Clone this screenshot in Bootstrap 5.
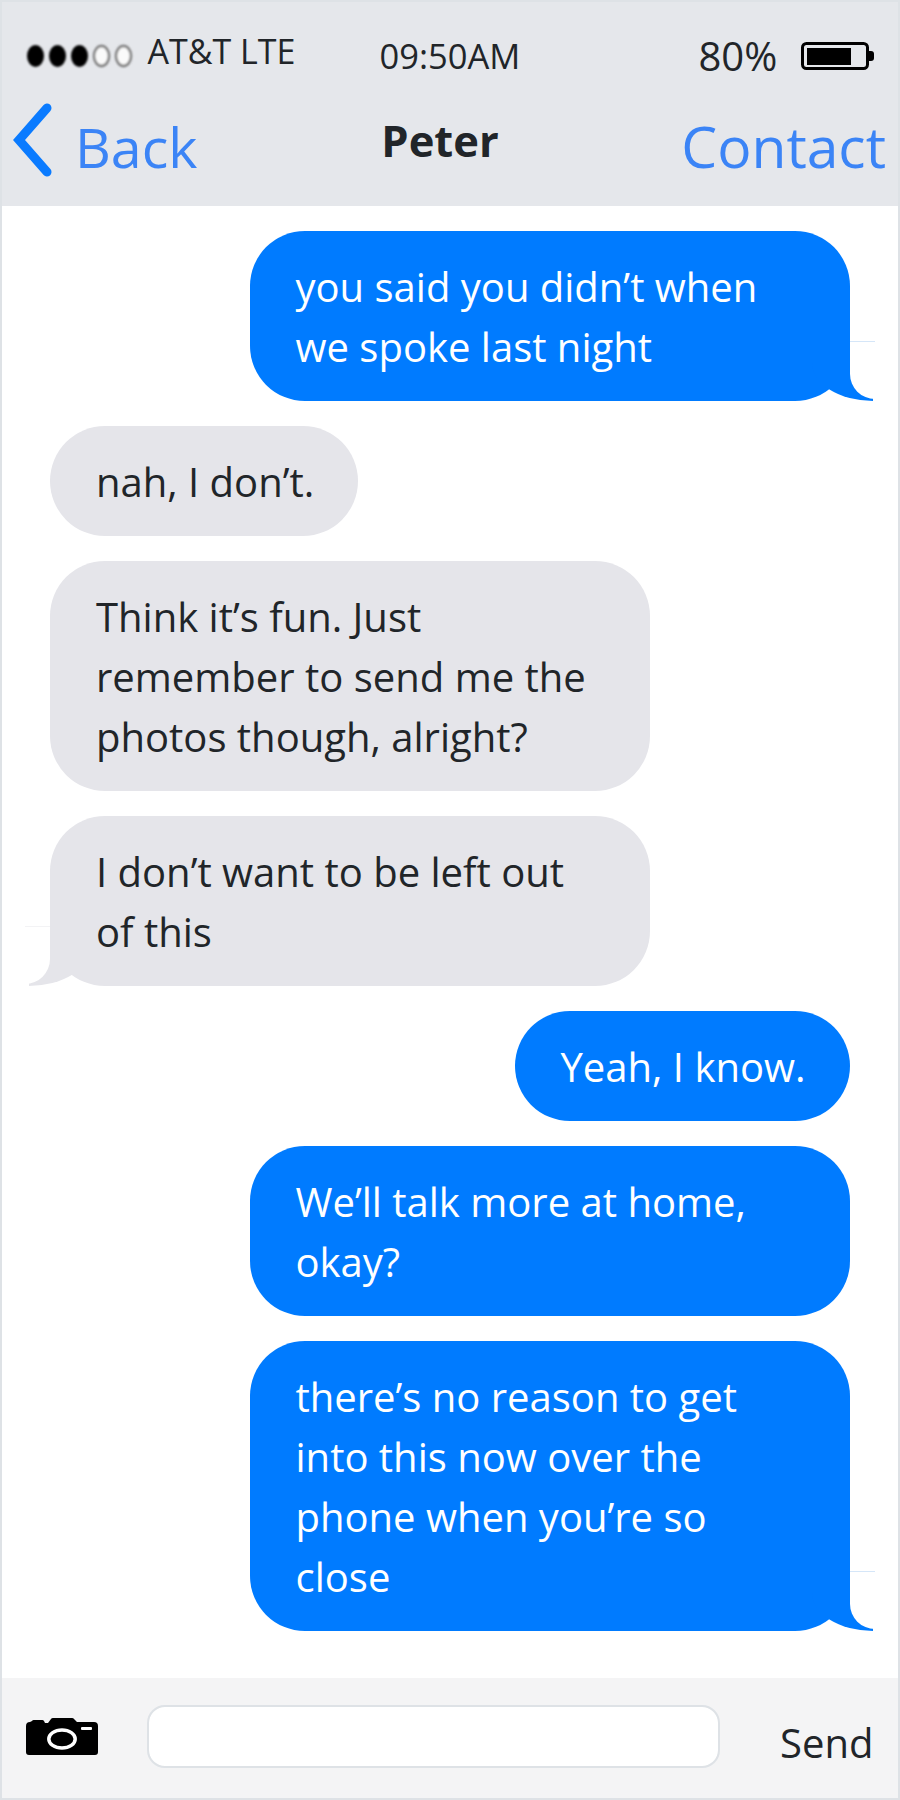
<!DOCTYPE html>
<html lang="en">
<head>
    <meta charset="UTF-8">
    <meta name="viewport" content="width=device-width, initial-scale=1.0">
    <title>Messages - Peter</title>
    <link href="https://cdn.jsdelivr.net/npm/bootstrap@5.3.0/dist/css/bootstrap.min.css" rel="stylesheet">
    <style>
        body { font-family: "Open Sans", "Noto Sans", sans-serif; color: #212529; background: #fff; }
        .phone-frame { height: 1800px; border: 2.5px solid #dee2e6; }

        /* top bars */
        .top-bar { height: 203.5px; background: #e5e7eb; }
        .status-row { height: 85px; padding-left: 23px; padding-top: 20px; }
        .carrier-box { width: 354.5px; font-size: 34px; padding-bottom: 7px; }
        .carrier-box svg { margin-right: 8.5px; }
        .clock-box { width: 319px; font-size: 34.5px; padding-top: 3px; }
        .charge-box { font-size: 40px; padding-top: 3px; }
        .charge-box svg { margin-left: 23.5px; }
        .title-row { height: 118.5px; }
        .back-chevron { margin-left: 11px; margin-top: -12px; }
        .nav-link-text { font-size: 57px; color: #3b84f6; line-height: 1; text-decoration: none; }
        .back-text { margin-left: 22px; font-size: 55.5px; }
        .contact-text { margin-right: 12px; }
        .peter-title { font-size: 43.5px; font-weight: 700; position: absolute; left: 0; right: 20px; top: 21px; text-align: center; line-height: 1.5; }

        /* message list */
        .msg-list { padding: 25px 48.5px 0 48px; gap: 25px; }
        .msg-bubble { position: relative; max-width: 600px; padding: 26px 44px 24px 46px; border-radius: 55px; font-size: 40px; line-height: 60px; }
        .msg-out { background: #007bff; color: #fff; }
        .msg-in { background: #e5e5ea; color: #212529; }

        /* tails */
        .has-tail::before, .has-tail::after { content: ""; position: absolute; }
        .msg-out.has-tail::before { bottom: 0; right: -23px; width: 61px; height: 60px; background: #007bff; border-bottom-left-radius: 61px 38px; }
        .msg-out.has-tail::after { bottom: 2px; right: -25px; width: 25px; height: 58px; background: #fff; border-top: 1px solid #d5e6f8; border-bottom-left-radius: 25px; }
        .msg-in.has-tail::before { bottom: 0; left: -21px; width: 61px; height: 60px; background: #e5e5ea; border-bottom-right-radius: 61px 38px; }
        .msg-in.has-tail::after { bottom: 2px; left: -25px; width: 25px; height: 58px; background: #fff; border-top: 1px solid #f3f3f5; border-bottom-right-radius: 25px; }

        /* footer */
        .compose-bar { height: 120.5px; background: #f4f4f5; }
        .camera-icon { margin-left: 23.5px; margin-top: -2px; }
        .compose-input { width: 573px; height: 63px; margin-left: 49.5px; margin-top: -2px; border: 2px solid #dee2e6; border-radius: 18px; }
        .send-text { font-size: 40px; margin-left: 60px; margin-top: 10px; line-height: 1.5; }
    </style>
</head>
<body class="m-0">
    <div class="phone-frame d-flex flex-column">
        <header class="top-bar flex-shrink-0">
            <div class="status-row d-flex align-items-center">
                <div class="carrier-box d-flex align-items-center">
                    <svg width="114" height="36" viewBox="0 0 114 36">
                        <defs><filter id="soft"><feGaussianBlur stdDeviation="1.1"/></filter></defs>
                        <g filter="url(#soft)">
                            <ellipse cx="10.5" cy="23" rx="8.5" ry="11" fill="#000"/>
                            <ellipse cx="32.5" cy="23" rx="8.5" ry="11" fill="#000"/>
                            <ellipse cx="54.5" cy="23" rx="8.5" ry="11" fill="#000"/>
                            <ellipse cx="76.5" cy="23" rx="7.5" ry="10" fill="#fafafa" stroke="#777" stroke-width="2.4"/>
                            <ellipse cx="98.5" cy="23" rx="7.5" ry="10" fill="#fafafa" stroke="#777" stroke-width="2.4"/>
                        </g>
                    </svg>
                    <span>AT&amp;T LTE</span>
                </div>
                <div class="clock-box">09:50AM</div>
                <div class="charge-box d-flex align-items-center">
                    <span>80%</span>
                    <svg width="73" height="28" viewBox="0 0 73 28">
                        <rect x="1.5" y="1.5" width="65" height="25" rx="4" fill="none" stroke="#000" stroke-width="3"/>
                        <rect x="6" y="6" width="44" height="17" fill="#000"/>
                        <path d="M68 9h2a3 3 0 0 1 3 3v4a3 3 0 0 1-3 3h-2z" fill="#000"/>
                    </svg>
                </div>
            </div>
            <div class="title-row d-flex align-items-center justify-content-between position-relative">
                <div class="d-flex align-items-center">
                    <svg class="back-chevron" width="40" height="76" viewBox="0 0 40 76">
                        <path d="M34 6 6 38l28 32" fill="none" stroke="#0a7bff" stroke-width="9" stroke-linecap="round" stroke-linejoin="miter"/>
                    </svg>
                    <a href="#" class="nav-link-text back-text">Back</a>
                </div>
                <div class="peter-title">Peter</div>
                <a href="#" class="nav-link-text contact-text">Contact</a>
            </div>
        </header>

        <main class="msg-list d-flex flex-column flex-grow-1">
            <div class="msg-bubble msg-out has-tail align-self-end">you said you didn’t when we spoke last night</div>
            <div class="msg-bubble msg-in align-self-start">nah, I don’t.</div>
            <div class="msg-bubble msg-in align-self-start">Think it’s fun. Just remember to send me the photos though, alright?</div>
            <div class="msg-bubble msg-in has-tail align-self-start">I don’t want to be left out of this</div>
            <div class="msg-bubble msg-out align-self-end">Yeah, I know.</div>
            <div class="msg-bubble msg-out align-self-end">We’ll talk more at home, okay?</div>
            <div class="msg-bubble msg-out has-tail align-self-end">there’s no reason to get into this now over the phone when you’re so close</div>
        </main>

        <footer class="compose-bar flex-shrink-0 d-flex align-items-center">
            <svg class="camera-icon" width="72" height="37" viewBox="0 0 72 37">
                <path fill="#000" d="M0 8a4 4 0 0 1 4-4l2-1a2 2 0 0 1 2-1h8a2 2 0 0 1 2 1l1 2h3l3-4q.5-1 2-1h19q1.500 0 2 1l3 3h17a4 4 0 0 1 4 4v26a3 3 0 0 1-3 3H3a3 3 0 0 1-3-3z"/>
                <ellipse cx="36" cy="21" rx="13.200" ry="9" fill="none" stroke="#fff" stroke-width="3.500"/>
                <rect x="55" y="9" width="11" height="3" rx="1" fill="#fff"/>
            </svg>
            <input type="text" class="form-control compose-input" aria-label="Message">
            <span class="send-text">Send</span>
        </footer>
    </div>

    <script src="https://cdn.jsdelivr.net/npm/bootstrap@5.3.0/dist/js/bootstrap.bundle.min.js"></script>
</body>
</html>
